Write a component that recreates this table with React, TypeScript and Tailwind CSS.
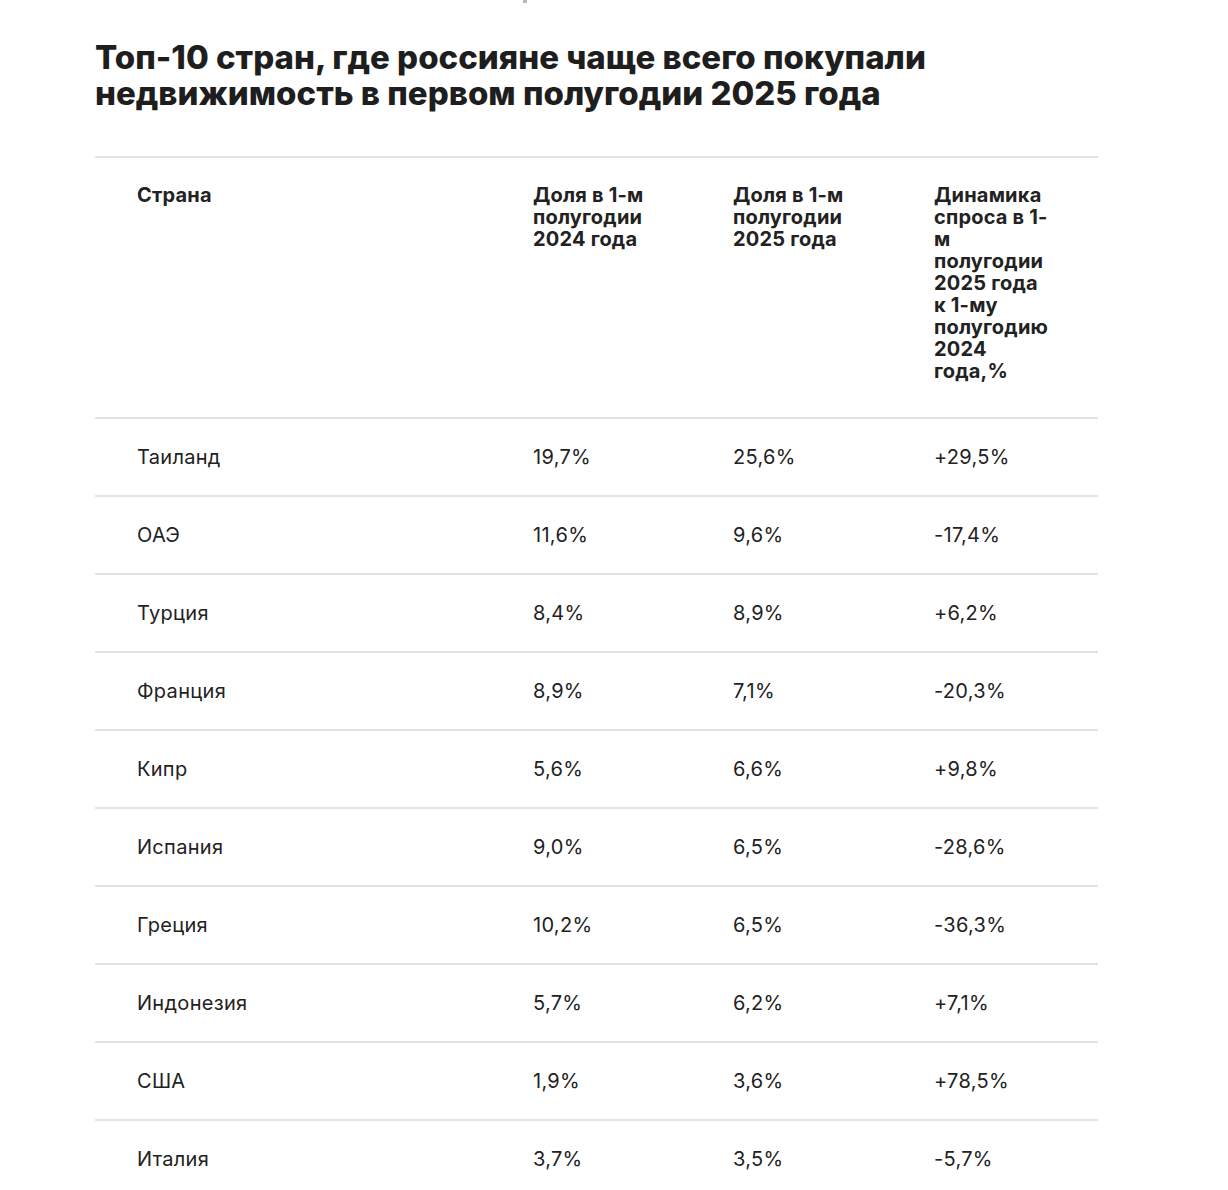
const rows: [string, string, string, string][] = [
  ["Таиланд", "19,7%", "25,6%", "+29,5%"],
  ["ОАЭ", "11,6%", "9,6%", "-17,4%"],
  ["Турция", "8,4%", "8,9%", "+6,2%"],
  ["Франция", "8,9%", "7,1%", "-20,3%"],
  ["Кипр", "5,6%", "6,6%", "+9,8%"],
  ["Испания", "9,0%", "6,5%", "-28,6%"],
  ["Греция", "10,2%", "6,5%", "-36,3%"],
  ["Индонезия", "5,7%", "6,2%", "+7,1%"],
  ["США", "1,9%", "3,6%", "+78,5%"],
  ["Италия", "3,7%", "3,5%", "-5,7%"],
];

function Lines({ lines }: { lines: string[] }) {
  return (
    <div className="whitespace-nowrap">
      {lines.map((l) => (
        <div key={l}>{l}</div>
      ))}
    </div>
  );
}

export default function App() {
  return (
    <div
      className="min-h-[1190px] bg-white text-[#222222]"
      style={{ fontFamily: "Inter, 'Noto Sans', sans-serif" }}
    >
      <div className="ml-[523px] h-[3px] w-[4px] bg-[#b8b8b8]" />
      <div className="w-[1003px] ml-[95px] pt-[36px]">
        <h1 className="text-[33px] font-extrabold leading-[36px] text-[#1e1e1e]">
          Топ-10 стран, где россияне чаще всего покупали
          <br />
          недвижимость в первом полугодии 2025 года
        </h1>

        <div className="mt-[45px] border-t-2 border-[#e3e3e3]">
          <div className="flex pt-[26px] pb-[35px] text-[20px] font-bold leading-[22px] tracking-[0.01em]">
            <div className="w-[438px] pl-[42px]">Страна</div>
            <div className="w-[200px]">
              <Lines lines={["Доля в 1-м", "полугодии", "2024 года"]} />
            </div>
            <div className="w-[201px]">
              <Lines lines={["Доля в 1-м", "полугодии", "2025 года"]} />
            </div>
            <div className="flex-1">
              <Lines
                lines={[
                  "Динамика",
                  "спроса в 1-",
                  "м",
                  "полугодии",
                  "2025 года",
                  "к 1-му",
                  "полугодию",
                  "2024",
                  "года,%",
                ]}
              />
            </div>
          </div>

          {rows.map((r) => (
            <div
              key={r[0]}
              className="flex h-[78px] items-center border-t-2 border-[#e3e3e3] text-[20px] leading-[24px] tracking-[0.015em]"
            >
              <div className="w-[438px] pl-[42px]">{r[0]}</div>
              <div className="w-[200px]">{r[1]}</div>
              <div className="w-[201px]">{r[2]}</div>
              <div className="flex-1">{r[3]}</div>
            </div>
          ))}
        </div>
      </div>
    </div>
  );
}
